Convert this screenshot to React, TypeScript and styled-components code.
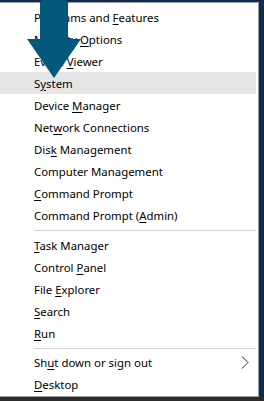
import styled, { createGlobalStyle } from 'styled-components'

const Global = createGlobalStyle`
    html, body {
        margin: 0;
        padding: 0;
        background: #0d2c4f;
    }
`

type Item = { label: string, key: number, active?: boolean, sub?: boolean }

const groups: Item[][] = [
    [
        { label: 'Programs and Features', key: 13 },
        { label: 'Mobility Options', key: 9 },
        { label: 'Event Viewer', key: 6 },
        { label: 'System', key: 1, active: true },
        { label: 'Device Manager', key: 7 },
        { label: 'Network Connections', key: 3 },
        { label: 'Disk Management', key: 3 },
        { label: 'Computer Management', key: 13 },
        { label: 'Command Prompt', key: 0 },
        { label: 'Command Prompt (Admin)', key: 16 },
    ],
    [
        { label: 'Task Manager', key: 0 },
        { label: 'Control Panel', key: 8 },
        { label: 'File Explorer', key: 5 },
        { label: 'Search', key: 0 },
        { label: 'Run', key: 0 },
    ],
    [
        { label: 'Shut down or sign out', key: 2, sub: true },
        { label: 'Desktop', key: 0 },
    ],
]

export default function App() {
    return (
        <Screen>
            <Global />
            <Workspace>
                <Menu>
                    { groups.map( ( group, g ) => (
                        <Group key={ g }>
                            { g > 0 && <Separator $bottom={ g === 1 ? 3 : 2 } /> }
                            { group.map( item => (
                                <Row key={ item.label } $active={ item.active }>
                                    <span>
                                        { item.label.slice( 0, item.key ) }
                                        <Key>{ item.label[ item.key ] }</Key>
                                        { item.label.slice( item.key + 1 ) }
                                    </span>
                                    { item.sub && (
                                        <Chevron width="8" height="13" viewBox="0 0 8 13">
                                            <polyline points="1,0.5 7,6.5 1,12.5" fill="none" stroke="#222" strokeWidth="1" />
                                        </Chevron>
                                    ) }
                                </Row>
                            ) ) }
                        </Group>
                    ) ) }
                    <Pointer width="54" height="80" viewBox="0 0 54 80">
                        <path d="M13 3 Q13 0 16 0 L38 0 Q41 0 41 3 L41 39 L54 39 L27 78 L0 39 L13 39 Z" fill="#04587c" />
                    </Pointer>
                </Menu>
            </Workspace>
            <Taskbar />
        </Screen>
    )
}

const Screen = styled.div`
    width: 264px;
    height: 401px;
    display: flex;
    flex-direction: column;
    overflow: hidden;
    background: #0d2c4f;
`

const Workspace = styled.div`
    flex: 1;
    display: flex;
    align-items: flex-start;
    padding-top: 2px;
`

const Menu = styled.div`
    position: relative;
    width: 258px;
    padding: 3px 0 1px;
    background: #fff;
    border: 1px solid #9c9c9c;
    border-left: none;
    font-family: "Segoe UI", "Noto Sans", sans-serif;
    font-size: 11.4px;
    color: #000;
`

const Group = styled.div`
    display: flex;
    flex-direction: column;
`

const Row = styled.div<{ $active?: boolean }>`
    height: 22px;
    display: flex;
    align-items: center;
    justify-content: space-between;
    margin: 0 2px 0 0;
    padding: 0 10px 0 34px;
    background: ${ p => p.$active ? '#e5e5e5' : 'transparent' };
    white-space: nowrap;
`

const Key = styled.span`
    text-decoration: underline;
    text-underline-offset: 2px;
`

const Separator = styled.div<{ $bottom: number }>`
    height: 1px;
    margin: 4px 2px ${ p => p.$bottom }px 34px;
    background: #d4d4d4;
`

const Chevron = styled.svg`
    display: block;
    margin-right: -3px;
`

const Pointer = styled.svg`
    position: absolute;
    left: 27px;
    top: -3px;
`

const Taskbar = styled.div`
    height: 4px;
    background: #2b2b2b;
`
